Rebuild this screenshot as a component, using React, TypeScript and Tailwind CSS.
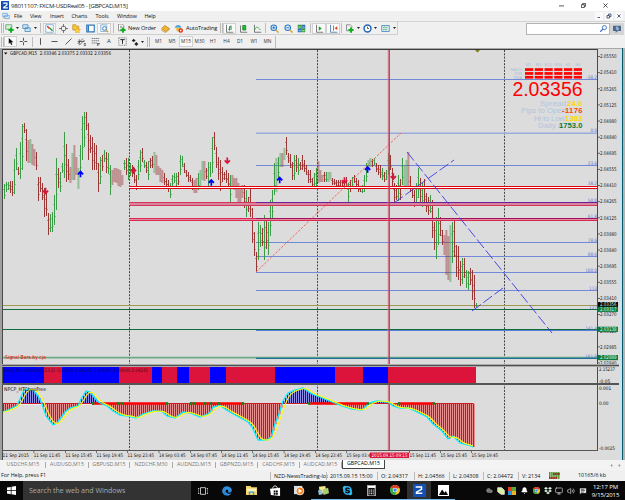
import type { ReactNode } from "react";
import { Bell, Cloud, Monitor, Volume2, MessageSquareText } from "lucide-react";
import { FaSkype, FaEdge } from "react-icons/fa";

const GREEN = "#2a9436";
const RED = "#922424";

// [high, low, kind] every 2px, upper case = pale body
const bars: [number, number, string][] = [
  [184, 199, "g"], [182, 192, "g"], [182, 190, "g"], [181, 193, "r"], [181, 196, "r"], [159, 194, "g"], [148, 170, "g"],
  [167, 175, "r"], [142, 179, "g"], [124, 170, "g"], [123, 133, "r"], [129, 161, "r"], [140, 163, "R"], [139, 163, "G"],
  [144, 165, "R"], [149, 166, "R"], [152, 170, "r"], [177, 201, "r"], [177, 192, "r"], [183, 200, "r"], [188, 217, "r"],
  [192, 216, "r"], [213, 235, "r"], [214, 232, "g"], [212, 232, "g"], [195, 225, "g"], [158, 210, "g"], [168, 188, "r"],
  [172, 192, "g"], [163, 173, "g"], [132, 178, "g"], [144, 182, "r"], [159, 180, "r"], [167, 183, "R"], [153, 180, "G"],
  [145, 180, "R"], [157, 175, "R"], [168, 189, "G"], [145, 177, "g"], [116, 160, "g"], [112, 147, "g"], [112, 130, "r"],
  [123, 160, "r"], [135, 153, "r"], [137, 170, "r"], [143, 170, "r"], [145, 170, "r"], [163, 192, "r"], [157, 184, "g"],
  [155, 171, "r"], [150, 162, "g"], [152, 173, "r"], [153, 174, "g"], [165, 195, "g"], [170, 185, "R"], [168, 182, "R"],
  [168, 183, "R"], [169, 186, "R"], [170, 187, "R"], [175, 185, "R"], [160, 170, "g"], [158, 175, "r"], [158, 180, "g"],
  [163, 176, "g"], [165, 177, "r"], [168, 183, "r"], [175, 190, "r"], [160, 180, "g"], [150, 172, "g"], [148, 162, "r"],
  [160, 168, "g"], [162, 173, "r"], [161, 180, "g"], [158, 168, "r"], [156, 168, "r"], [152, 173, "G"], [155, 175, "R"],
  [166, 175, "R"], [168, 182, "R"], [170, 183, "R"], [173, 185, "r"], [178, 187, "r"], [180, 192, "r"], [183, 198, "g"],
  [175, 187, "g"], [173, 183, "g"], [173, 187, "g"], [172, 185, "r"], [155, 175, "g"], [156, 167, "g"], [163, 173, "r"],
  [170, 177, "r"], [172, 182, "r"], [175, 182, "r"], [178, 190, "r"], [180, 193, "R"], [178, 193, "R"], [173, 190, "g"],
  [170, 187, "G"], [161, 180, "G"], [161, 181, "R"], [168, 179, "r"], [162, 188, "g"], [162, 177, "g"], [137, 173, "g"],
  [132, 150, "r"], [147, 168, "r"], [157, 180, "r"], [160, 191, "r"], [167, 182, "r"], [172, 180, "r"], [170, 183, "r"],
  [173, 188, "r"], [175, 202, "g"], [175, 187, "R"], [178, 190, "R"], [178, 198, "R"], [183, 206, "R"], [187, 206, "R"],
  [185, 198, "R"], [185, 208, "r"], [190, 217, "g"], [197, 212, "r"], [189, 217, "r"], [208, 243, "r"], [232, 256, "r"],
  [252, 272, "r"], [222, 260, "g"], [225, 247, "g"], [228, 246, "r"], [215, 260, "g"], [218, 249, "r"], [222, 255, "g"],
  [200, 236, "g"], [190, 220, "g"], [163, 195, "g"], [158, 192, "G"], [157, 178, "g"], [153, 167, "G"], [153, 167, "R"],
  [148, 160, "G"], [137, 155, "r"], [153, 163, "r"], [154, 168, "r"], [162, 180, "r"], [155, 180, "g"], [155, 172, "r"],
  [158, 175, "g"], [162, 170, "r"], [155, 170, "r"], [160, 172, "r"], [165, 175, "r"], [170, 183, "r"], [170, 183, "r"],
  [178, 187, "r"], [173, 187, "g"], [168, 187, "g"], [161, 183, "R"], [170, 182, "R"], [175, 182, "R"], [172, 182, "r"],
  [172, 182, "g"], [172, 182, "G"], [172, 180, "G"], [178, 185, "r"], [179, 185, "r"], [180, 187, "r"], [180, 187, "r"],
  [180, 188, "r"], [180, 187, "r"], [180, 189, "r"], [177, 189, "r"], [183, 202, "g"], [180, 192, "r"], [177, 187, "g"],
  [175, 183, "r"], [178, 187, "r"], [180, 192, "r"], [187, 192, "r"], [185, 193, "g"], [175, 192, "g"], [163, 182, "g"],
  [160, 168, "G"], [158, 167, "G"], [159, 167, "r"], [158, 165, "g"], [163, 172, "r"], [165, 175, "r"], [165, 178, "r"],
  [168, 180, "g"], [172, 182, "r"], [170, 180, "g"], [153, 175, "g"], [155, 170, "r"], [168, 186, "r"], [183, 203, "r"],
  [185, 200, "r"], [175, 201, "g"], [179, 200, "r"], [158, 185, "g"], [165, 187, "G"], [160, 188, "G"], [152, 188, "R"],
  [176, 192, "r"], [187, 198, "r"], [190, 207, "r"], [183, 203, "g"], [168, 198, "g"], [178, 203, "r"], [183, 207, "g"],
  [179, 203, "r"], [193, 212, "r"], [197, 215, "r"], [195, 213, "g"], [200, 238, "r"], [222, 250, "r"], [217, 259, "g"],
  [208, 245, "g"], [217, 236, "r"], [230, 245, "r"], [235, 255, "R"], [230, 275, "R"], [236, 280, "R"], [225, 282, "G"],
  [222, 263, "g"], [220, 257, "r"], [245, 277, "r"], [246, 280, "r"], [261, 286, "r"], [258, 284, "g"], [258, 278, "r"],
  [270, 288, "g"], [271, 290, "g"], [268, 285, "r"], [270, 300, "r"], [275, 308, "r"], [303, 308, "g"],
];

const strip: [number, number, boolean][] = [
  [3, 44, true], [44, 62, false], [62, 119, true], [119, 152, false], [152, 162, true], [162, 177, false],
  [177, 189, true], [189, 210, false], [210, 226, true], [226, 275, false], [275, 335, true], [335, 363, false],
  [363, 388, true], [388, 476, false],
];

const curve: [number, number][] = [
  [3, 412], [10, 409], [17, 405.5], [20, 399], [24, 390], [28, 389], [33, 390], [38, 396], [42, 404], [46, 416],
  [53, 425], [57, 423], [60, 419], [65, 412], [70, 408], [78, 406], [81, 399], [86, 391], [90, 392], [94, 397],
  [98, 402], [107, 406], [113, 411], [120, 415], [128, 416], [136, 418], [143, 414], [153, 411], [162, 411.5],
  [167, 416], [175, 418], [183, 412], [190, 413], [200, 417], [208, 414], [211, 411], [213, 407], [220, 405.5],
  [228, 411], [237, 416], [248, 422], [252, 427], [258, 440], [267, 440], [271, 437], [275, 424], [279, 414],
  [283, 401], [288, 393], [295, 390], [303, 388], [312, 394], [320, 397], [332, 402], [342, 406], [352, 409],
  [362, 410], [367, 405], [372, 402], [377, 401], [388, 402], [393, 406], [400, 408], [408, 408], [415, 411],
  [427, 417], [433, 424], [442, 431], [448, 439], [453, 436], [460, 443], [468, 445], [473, 447],
];

function curveAt(x: number) {
  if (x <= 3) return 412;
  for (let i = 1; i < curve.length; i++) {
    const [x0, y0] = curve[i - 1];
    const [x1, y1] = curve[i];
    if (x <= x1) return y0 + ((y1 - y0) * (x - x0)) / (x1 - x0);
  }
  return 447;
}

function signalAt(x: number) {
  return (curveAt(x - 6) + curveAt(x - 4) + curveAt(x - 2) + curveAt(x)) / 4;
}

const xs = Array.from({ length: 236 }, (_, i) => 3 + i * 2);
const signal = xs.map((x) => `${x},${signalAt(x).toFixed(1)}`).join(" ");

const prices = [
  "2.05550", "2.05410", "2.05265", "2.05125", "2.04980", "2.04840", "2.04695", "2.04555", "2.04410", "2.04265",
  "2.04125", "2.03980", "2.03840", "2.03695", "2.03555", "2.03410", "2.03270", "2.03125", "2.02985", "2.02840",
];

const fibs: [number, string][] = [
  [79.5, "-38.2"], [133, "0.0"], [165.5, "23.6"], [186, "38.2"], [202.5, "50.0"], [219, "61.8"], [242.5, "78.6"],
  [256.5, "88.6"], [272.5, "100.0"], [290.5, "113"], [309.5, "127"], [330.5, "141.4"], [358.5, "161.8"],
];

const dates: [number, string][] = [
  [2, "11 Sep 2015"], [33.3, "11 Sep 11:45"], [65, "11 Sep 15:45"], [96, "11 Sep 19:45"], [127, "11 Sep 23:45"],
  [158.5, "14 Sep 03:45"], [190, "14 Sep 07:45"], [221, "14 Sep 11:45"], [252, "14 Sep 15:45"],
  [283.5, "14 Sep 19:45"], [315, "14 Sep 23:45"], [346, "15 Sep 03:45"], [409, "15 Sep 11:45"],
  [440, "15 Sep 15:45"], [471, "15 Sep 19:45"],
];

const tags: [number, string, string][] = [
  [302, "2.03356", "#000"], [306.7, "2.03317", "#0f7a3c"], [326.7, "2.03138", "#0f7a3c"], [355, "2.02889", "#0f7a3c"],
];

function Arrow({ x, y, up }: { x: number; y: number; up?: boolean }) {
  return (
    <path
      d="M0 -3.2V2.4M-2.6 -0.4L0 2.4L2.6 -0.4"
      transform={`translate(${x} ${y})${up ? " scale(1 -1)" : ""}`}
      fill="none"
      stroke={up ? "#0000ff" : "#dc143c"}
      strokeWidth="1.7"
    />
  );
}

function Chart() {
  return (
    <svg width="625" height="412" viewBox="0 48 625 412" className="block shrink-0">
      <rect x="0" y="48" width="625" height="412" fill="#f0f0f0" />
      <rect x="0" y="48" width="2" height="412" fill="#a0a0a0" />
      <rect x="2" y="49" width="618" height="411" fill="#dcdcdc" />
      <rect x="619" y="48" width="3" height="412" fill="#c5e3f2" />
      <rect x="622" y="48" width="1" height="412" fill="#0c5563" />
      <rect x="623" y="48" width="2" height="412" fill="#b4b4b4" />
      <rect x="0" y="48" width="622" height="1" fill="#a8a8a8" />
      <rect x="2" y="49" width="596" height="1" fill="#3c3c3c" />
      <path d="M2.5 49V460M597.5 49V451" stroke="#4a4a4a" fill="none" />

      {/* session separators */}
      <path d="M129.5 50V450M317.5 50V450M504.5 50V450" stroke="#444" strokeDasharray="2 1.3" />

      {/* levels */}
      <path
        d="M256 79.5H597M256 165.5H597M256 242.5H597M256 256.5H597M256 272.5H597M256 290.5H597"
        stroke="#6f8ad8"
      />
      <path d="M256 133.2H597" stroke="#98abdc" strokeWidth="1.6" />
      <path d="M3 305.5H597" stroke="#a09a50" />
      <path d="M3 309.5H597M3 329.5H597" stroke="#0f6b3c" />
      <path d="M256 330.5H597" stroke="#5580d8" />
      <path d="M3 357.7H597" stroke="#6cab88" strokeWidth="1.7" />
      <path d="M256 358.3H597" stroke="#20709a" strokeWidth="1.2" />

      {bars.map(([hi, lo, k], i) => {
        const x = 4 + i * 2;
        const pale = k === "G" || k === "R";
        const color = k.toLowerCase() === "g" ? GREEN : RED;
        return pale ? (
          <rect key={i} x={x - 0.6} y={hi} width="2" height={lo - hi} fill={color} opacity="0.4" />
        ) : (
          <g key={i} fill={color}>
            <rect x={x} y={hi} width="1" height={lo - hi} opacity="0.9" />
            <rect x={x - 1} y={Math.round(hi + (lo - hi) * 0.3)} width="1" height="1" opacity="0.45" />
            <rect x={x + 1} y={Math.round(hi + (lo - hi) * 0.7)} width="1" height="1" opacity="0.45" />
          </g>
        );
      })}

      <rect x="129" y="187" width="468" height="1" fill="#fff" />
      <path d="M129 186.5H597M129 188.5H597" stroke="#e00010" />
      <rect x="129" y="203" width="468" height="2" fill="#d8849c" />
      <path d="M129 202.5H597M129 205.5H597" stroke="#d5375c" />
      <path d="M256 202.5H597" stroke="#6a1f9a" />
      <rect x="129" y="219" width="468" height="1" fill="#e08aa4" />
      <path d="M129 218.5H597M129 220.5H597" stroke="#dc2850" />
      <path d="M256 218.5H597" stroke="#a0105c" />

      <path d="M256 272L401 133" stroke="#f05a4c" strokeWidth="0.9" strokeDasharray="2.4 1.5" />
      <path d="M407 152L552 333M394 203L454 160M472 311L503 288" stroke="#3a3ae6" strokeWidth="0.9" strokeDasharray="11 3" />
      <path d="M388 50V450" stroke="#aaa" strokeWidth="0.6" />
      <path d="M389.2 50V450" stroke="#e0244c" strokeWidth="1.4" />

      <Arrow x={45.5} y={191} />
      <Arrow x={133.5} y={170} />
      <Arrow x={227.3} y={160.7} />
      <Arrow x={344.5} y={180.5} />
      <Arrow x={393.3} y={176.5} />
      <Arrow x={80.5} y={174} up />
      <Arrow x={211.3} y={182.5} up />
      <Arrow x={279.7} y={180} up />
      <Arrow x={367.6} y={169.5} up />

      {/* price panel */}
      <path d="M475 50h5l-2.5 2.5z" fill="#808000" />
      <g fontFamily="Liberation Sans, sans-serif">
        <g fontSize="3.8" fill="#a8bcd8">
          {["M1", "M5", "M15", "M30", "H1", "H4"].map((t, i) => (
            <text key={t} x={528.5 + i * 9.9} y="66" textAnchor="middle">{t}</text>
          ))}
          <text x="522" y="71" textAnchor="end">MACD</text>
          <text x="522" y="75" textAnchor="end">STR</text>
          <text x="522" y="79" textAnchor="end">EMA</text>
        </g>
        {[68.2, 72.1, 75.9].map((y) =>
          [0, 1, 2, 3, 4, 5].map((c) => (
            <rect key={`${y}-${c}`} x={525 + c * 9.75} y={y} width="8.2" height="2.7" fill="#ff0000" />
          ))
        )}
        <text x="512.5" y="95.7" fontSize="19.5" textLength="70" fill="#ff0000">2.03356</text>
        <g fontSize="7.8" fill="#b0c4de">
          <text x="540" y="106" textLength="26">Spread</text>
          <text x="521" y="113.3" textLength="45">Pips to Open</text>
          <text x="534" y="120.5" textLength="31">Hi to Low</text>
          <text x="538" y="127.8" textLength="25">Daily A</text>
        </g>
        <g fontSize="7.6" fontWeight="bold">
          <text x="567" y="106" textLength="15.5" fill="#ffd700">24.0</text>
          <text x="562" y="113.3" textLength="20.5" fill="#ff4500">-1176</text>
          <text x="565" y="120.5" textLength="17.5" fill="#ffd700">1383</text>
          <text x="559" y="127.8" textLength="23.5" fill="#0a7a3a">1753.0</text>
        </g>
      </g>

      <g fontFamily="DejaVu Sans Condensed, DejaVu Sans, sans-serif" fontSize="5">
        <path d="M4 52.5h3.4l-1.7 2z" fill="#000" />
        <text x="10" y="55.4" textLength="101" lengthAdjust="spacingAndGlyphs" fill="#111">
          GBPCAD,M15&nbsp; 2.03346 2.03375 2.03332 2.03356
        </text>
        <text x="5" y="359" fontSize="5.4" textLength="41" lengthAdjust="spacingAndGlyphs" fill="#ff0000">
          Signal Bars by cja
        </text>
        <g fontSize="4.6" fill="#5f7bd0" textAnchor="end">
          {fibs.map(([y, t]) => (
            <text key={t} x="597" y={y - 1}>{t}</text>
          ))}
        </g>
        <g fill="#222">
          {prices.map((p, i) => (
            <g key={p}>
              <path d={`M598 ${56.5 + i * 16.13}h2`} stroke="#444" strokeWidth="0.8" />
              <text x="600" y={58.3 + i * 16.13} textLength="16.5" lengthAdjust="spacingAndGlyphs">{p}</text>
            </g>
          ))}
        </g>
        {tags.map(([y, t, bg]) => (
          <g key={t}>
            <rect x="598" y={y} width="20" height="5.2" fill={bg} />
            <text x="600" y={y + 4.4} textLength="16.5" lengthAdjust="spacingAndGlyphs" fill="#dfe">{t}</text>
          </g>
        ))}
      </g>

      {/* deep bar strip */}
      <rect x="2" y="364" width="617" height="3" fill="#aaa" />
      <rect x="2" y="365" width="617" height="1" fill="#505050" />
      {strip.map(([a, b, up]) => (
        <rect key={a} x={a} y="367" width={b - a} height="16" fill={up ? "#0000ff" : "#dc143c"} />
      ))}
      <rect x="2" y="383" width="617" height="2" fill="#555" />

      {/* oscillator */}
      <path d="M3 404.5H309" stroke="#eee" />
      {xs.map((x) => {
        const y = curveAt(x);
        return (
          <rect
            key={x}
            x={x}
            y={Math.min(y, 403.5)}
            width="1.35"
            height={Math.abs(y - 403.5)}
            fill={y < 403.5 ? "#0000ff" : "#ff0000"}
          />
        );
      })}
      <path d="M3 403.5H473" stroke="#cc1c24" />
      <path d="M92 403.5H166M190 403.5H243M309 403.5H367M399 403.5H434" stroke="#ff0000" strokeWidth="2.4" />
      <polyline points={curve.map((p) => p.join(",")).join(" ")} fill="none" stroke="#00f0ff" strokeWidth="1.3" />
      <polyline points={signal} fill="none" stroke="#ffff00" strokeWidth="1.1" />
      {[93, 118, 122, 167, 191, 194, 205, 211, 219, 243, 309, 368, 399, 434].map((x) => (
        <circle key={x} cx={x} cy="403.5" r="1.4" fill="#0a8a1c" />
      ))}

      <path d="M2 450.5H598" stroke="#555" />
      <g fontFamily="DejaVu Sans Condensed, DejaVu Sans, sans-serif" fontSize="4.8" fill="#111">
        <text x="4" y="372.3" textLength="144" lengthAdjust="spacingAndGlyphs" opacity="0.75">
          Deep Bar Indicator (33.1) -1.00000 2.04241 -1.00000 -1.00000 2.04241
        </text>
        <text x="4" y="391" fontSize="5" textLength="42" lengthAdjust="spacingAndGlyphs">NPCP_HTChopFree</text>
        <text x="599" y="371" textLength="16" lengthAdjust="spacingAndGlyphs">2.15237</text>
        <text x="599" y="382.5">-0.05</text>
        <text x="599" y="390">0.001</text>
        <text x="599" y="405">0.00</text>
        <text x="599" y="449.5" textLength="16" lengthAdjust="spacingAndGlyphs">-0.0025</text>
        {dates.map(([x, t]) => (
          <g key={x}>
            <path d={`M${x + 0.5} 450v3`} stroke="#555" strokeWidth="0.8" />
            <text x={x + 0.5} y="457" textLength="26.5" lengthAdjust="spacingAndGlyphs">{t}</text>
          </g>
        ))}
        <rect x="370" y="452.5" width="39" height="5.5" fill="#dc143c" />
        <text x="371.5" y="457" textLength="36" lengthAdjust="spacingAndGlyphs" fill="#fff">2015.09.15 09:15</text>
      </g>
    </svg>
  );
}

function Icon({ children, size = 9 }: { children: ReactNode; size?: number }) {
  return (
    <svg width={size} height={size} viewBox="0 0 12 12" fill="none" className="block shrink-0">
      {children}
    </svg>
  );
}

function Cell({ w, on, children }: { w: string; on?: boolean; children?: ReactNode }) {
  return (
    <div className={`flex h-[11px] shrink-0 items-center justify-center ${w} ${on ? "border border-[#d0d0d0] bg-[#f9f9f9]" : ""}`}>
      {children}
    </div>
  );
}

const Sep = () => <div className="h-[10px] w-px shrink-0 bg-[#bdbdbd]" />;
const Grip = () => <div className="h-[10px] w-[3px] shrink-0 border-x border-[#b8b8b8]" />;
const Caret = () => (
  <svg width="3" height="2" viewBox="0 0 6 4" className="block">
    <path d="M0 0h6l-3 4z" fill="#222" />
  </svg>
);

const Plus = () => <path d="M8 4.5v7M4.5 8h7" stroke="#10b020" strokeWidth="2.6" />;

function TitleBar() {
  return (
    <div className="flex h-[11px] shrink-0 items-center bg-white pl-[1px] pr-[17px] text-[6.1px] text-[#222]">
      <div className="flex h-[9px] w-[8px] items-center justify-center bg-[#1450b4]">
        <Icon size={7}>
          <path d="M2 2h6.5v3L3 9v1h7" stroke="#fff" strokeWidth="2" />
        </Icon>
      </div>
      <span className="ml-[2px] whitespace-nowrap tracking-[-0.28px]">98011107: FXCM-USDReal05 - [GBPCAD,M15]</span>
      <div className="ml-auto flex gap-[17px]">
        <Icon size={5}><path d="M0 7h12" stroke="#222" strokeWidth="1.8" /></Icon>
        <Icon size={5}><path d="M1 4h7v7H1zM4 4V1h7v7H8" stroke="#222" strokeWidth="1.8" /></Icon>
        <Icon size={5}><path d="M1 1l10 10M11 1L1 11" stroke="#222" strokeWidth="1.8" /></Icon>
      </div>
    </div>
  );
}

function MenuBar() {
  return (
    <div className="flex h-[11px] shrink-0 items-center border-b border-[#d4d4d4] text-[5.4px] tracking-[-0.1px] text-[#111]">
      <div className="w-[14px] pl-[2px]">
        <Icon size={8}>
          <path d="M1 2h7v5H1zM4 5h7v5H4z" fill="#d8ecfa" stroke="#5b9bd0" />
          <path d="M1 10l2-2 2 2" stroke="#e0a040" />
        </Icon>
      </div>
      <span className="w-[16px]">File</span>
      <span className="w-[20px]">View</span>
      <span className="w-[21.5px]">Insert</span>
      <span className="w-[24px]">Charts</span>
      <span className="w-[21.5px]">Tools</span>
      <span className="w-[27.5px]">Window</span>
      <span>Help</span>
      <div className="ml-auto flex gap-[2px] pr-[2px]">
        {["M3 9h5", "M2 5h5v5H2zM5 5V2h5v5H7", "M3 3l6 6M9 3l-6 6"].map((d) => (
          <div key={d} className="flex h-[8px] w-[8px] items-center justify-center bg-[#fafafa]">
            <Icon size={6}><path d={d} stroke="#3a4a68" strokeWidth="1.7" /></Icon>
          </div>
        ))}
      </div>
    </div>
  );
}

function MainToolbar() {
  return (
    <div className="flex h-[13px] shrink-0 items-center pl-[1px] text-[5.7px] text-[#111]">
      <div className="flex h-[13px] w-[397px] shrink-0 items-center border-b border-r border-[#cfcfcf]">
        <Grip />
        <Cell w="w-[11px]"><Icon><path d="M1 1h8v6H1z" fill="#d8f0d8" stroke="#4a9a5a" /><Plus /></Icon></Cell>
        <Cell w="w-[5px]"><Caret /></Cell>
        <Cell w="w-[13px]"><Icon><path d="M1 1h7v5H1zM4 5h7v5H4z" fill="#cfe4f6" stroke="#3f85b5" /></Icon></Cell>
        <Cell w="w-[4px]"><Caret /></Cell>
        <Cell w="w-[6px]"><Sep /></Cell>
        <Cell w="w-[13px]" on>
          <Icon><path d="M1 1h10v10H1z" fill="#fff" stroke="#5aa0d0" /><path d="M3 3l3 3" stroke="#e03020" strokeWidth="2" /><path d="M6 5l4 4" stroke="#20a030" strokeWidth="2" /></Icon>
        </Cell>
        <Cell w="w-[14px]"><Icon><circle cx="6" cy="6" r="3.2" stroke="#555" /><path d="M6 0v4M6 8v4M0 6h4M8 6h4" stroke="#555" /></Icon></Cell>
        <Cell w="w-[13px]"><Icon><path d="M1 1h4l1 2h3v5H1z" fill="#f5c842" stroke="#c89018" /><path d="M7 5l1.5 2.2 2.8.2-2 2 .5 2.5-2.6-1.2-2.4 1.2.4-2.6-2-1.9 2.8-.2z" fill="#ffd84a" stroke="#c89018" strokeWidth=".6" /></Icon></Cell>
        <Cell w="w-[14px]"><Icon><path d="M1 1.5h10v9H1z" fill="#fff" stroke="#2f78b8" strokeWidth="1.5" /><path d="M2 2h2v8H2z" fill="#2f78b8" /></Icon></Cell>
        <Cell w="w-[14px]" on><Icon><path d="M1 1h8v9H1z" fill="#e8f2fb" stroke="#7aa6cc" /><circle cx="6" cy="6" r="2.6" stroke="#2a70b0" /><path d="M8 8l3 3" stroke="#d8a030" strokeWidth="1.6" /></Icon></Cell>
        <Cell w="w-[5px]"><Sep /></Cell>
        <Cell w="w-[11px]"><Icon><path d="M2 0h5l2 2v7H2z" fill="#fff" stroke="#777" /><path d="M4 3h3M4 5h3" stroke="#777" /><Plus /></Icon></Cell>
        <span className="w-[32px] shrink-0 whitespace-nowrap pl-[1px] tracking-[-0.12px]">New Order</span>
        <Cell w="w-[12px]"><Icon><path d="M1 6l4-4 6 4-5 4z" fill="#f0b828" stroke="#b07a10" /><path d="M1 7v1.5l5 3 5-4V6" stroke="#c88a10" /></Icon></Cell>
        <Cell w="w-[15px]"><Icon><path d="M1 5c1-5 8-5 9 0z" fill="#4aa4e0" /><path d="M2 5h7v5H4z" fill="#f0c040" /><circle cx="9" cy="8.5" r="3" fill="#e02818" /><path d="M8 7.5h2v2H8z" fill="#fff" /></Icon></Cell>
        <span className="w-[34px] shrink-0 whitespace-nowrap tracking-[-0.12px]">AutoTrading</span>
        <Grip />
        <Cell w="w-[13px]" on><Icon><path d="M2 1v10h9M6 3v6M4 7h2M6 4h2" stroke="#555" /><path d="M8 2v6" stroke="#18a030" strokeWidth="1.4" /></Icon></Cell>
        <Cell w="w-[14px]"><Icon><path d="M2 2v9h9" stroke="#555" /><path d="M5 2h4v6H5z" fill="#20c038" stroke="#0a7a1c" /></Icon></Cell>
        <Cell w="w-[14px]"><Icon><path d="M2 1v10h9" stroke="#555" /><path d="M2 8c2-5 4-5 8 0" stroke="#18a030" /></Icon></Cell>
        <Cell w="w-[3px]"><Sep /></Cell>
        <Cell w="w-[14px]"><Icon><circle cx="5" cy="5" r="3.7" fill="#d4eafc" stroke="#2d7cc8" strokeWidth="1.4" /><path d="M3 5h4M5 3v4" stroke="#1860b0" /><path d="M8 8l3.5 3.5" stroke="#d8a830" strokeWidth="2" /></Icon></Cell>
        <Cell w="w-[14px]"><Icon><circle cx="5" cy="5" r="3.7" fill="#d4eafc" stroke="#2d7cc8" strokeWidth="1.4" /><path d="M3 5h4" stroke="#1860b0" /><path d="M8 8l3.5 3.5" stroke="#d8a830" strokeWidth="2" /></Icon></Cell>
        <Cell w="w-[13px]"><Icon><path d="M1 1h5v5H1zM6 6h5v5H6z" fill="#30a030" /><path d="M6 1h5v5H6zM1 6h5v5H1z" fill="#2868b8" /><path d="M2 4h3M7 4h3M2 9h3M7 9h3" stroke="#dfe" /></Icon></Cell>
        <Cell w="w-[4px]"><Sep /></Cell>
        <Cell w="w-[14px]" on><Icon><path d="M2 1v10h9" stroke="#555" /><path d="M5 3l4 3-4 3z" fill="#18a030" /></Icon></Cell>
        <Cell w="w-[14px]" on><Icon><path d="M2 1v10h9M6 2v7" stroke="#3a6a9a" /><path d="M11 3L7.5 5.5 11 8z" fill="#d04020" /></Icon></Cell>
        <Cell w="w-[3px]"><Sep /></Cell>
        <Cell w="w-[13px]"><Icon><path d="M2 1h5l2 2v6H2z" fill="#eee" stroke="#777" /><Plus /></Icon></Cell>
        <Cell w="w-[4px]"><Caret /></Cell>
        <Cell w="w-[14px]"><Icon><circle cx="6" cy="6" r="4.6" fill="#fff" stroke="#2468b4" strokeWidth="2" /><path d="M6 3.5V6h2" stroke="#333" /></Icon></Cell>
        <Cell w="w-[3px]"><Caret /></Cell>
        <Cell w="w-[16px]"><Icon><path d="M1 2h10v8H1z" fill="#e4f2fa" stroke="#3a7ab0" /><path d="M2.5 5l2-1 2 1 2-1M2.5 8l2-1 2 1 2-1" stroke="#30a050" /></Icon></Cell>
        <Cell w="w-[3px]"><Caret /></Cell>
      </div>
      <div className="ml-auto flex h-[12px] w-[84px] items-center justify-end border border-[#b4b4b4] bg-white pr-[2px]">
        <Icon size={7}><circle cx="7.5" cy="4.5" r="3.5" stroke="#3b6fc4" strokeWidth="1.6" /><path d="M5 7l-4.5 4.5" stroke="#3b6fc4" strokeWidth="2.2" /></Icon>
      </div>
      <div className="mr-[1px] flex h-[12px] w-[14px] items-center justify-center bg-[#d4d4d4]">
        <Icon size={8}><path d="M0 1h12v8H7l-3 3V9H0z" fill="#49698f" /><path d="M5 3h3M5 3v2h3v2H5" stroke="#dfe8f4" /></Icon>
      </div>
    </div>
  );
}

function LineToolbar() {
  const tfs: [string, string][] = [
    ["M5", "w-[14px]"], ["M15", "w-[14px]"], ["M30", "w-[13px]"], ["H1", "w-[14px]"], ["H4", "w-[13px]"],
    ["D1", "w-[14px]"], ["W1", "w-[14px]"], ["MN", "w-[13px]"],
  ];
  return (
    <div className="flex h-[13px] shrink-0 items-center pl-[1px]">
      <div className="flex h-[12px] w-[275px] shrink-0 items-center border-r border-[#bdbdbd] text-[4.8px] text-[#333]">
        <Grip />
        <Cell w="w-[13px]" on><Icon size={7}><path d="M3 0v10l2.4-2 1.8 4 2-1-1.8-3.6H11z" fill="#111" /></Icon></Cell>
        <Cell w="w-[13px]"><Icon><path d="M6 1v4M6 7v4M1 6h4M7 6h4" stroke="#444" strokeWidth="1.2" /></Icon></Cell>
        <Cell w="w-[4px]"><Sep /></Cell>
        <Cell w="w-[13px]"><Icon><path d="M6 1.5v9" stroke="#444" strokeWidth="1.2" /></Icon></Cell>
        <Cell w="w-[14px]"><Icon><path d="M2 6h8" stroke="#444" strokeWidth="1.2" /></Icon></Cell>
        <Cell w="w-[14px]"><Icon><path d="M2 10l8-8" stroke="#444" strokeWidth="1.2" /></Icon></Cell>
        <Cell w="w-[13px]"><Icon><path d="M1 9l7-7M3 11l7-7M1 6h9M3 3v7" stroke="#444" /><path d="M9 9h3M9 11h3" stroke="#222" /></Icon></Cell>
        <Cell w="w-[14px]"><Icon><path d="M1 2h10M1 5h10M1 8h7" stroke="#555" strokeDasharray="2 .6" /><path d="M9 8v4M9 9h3" stroke="#222" /></Icon></Cell>
        <Cell w="w-[14px]"><span className="text-[6px]">A</span></Cell>
        <Cell w="w-[13px]"><Icon><path d="M1 1h10v10H1z" stroke="#666" strokeDasharray="1.4 1" /><path d="M3 3.5h6M6 3.5V9" stroke="#222" strokeWidth="1.3" /></Icon></Cell>
        <Cell w="w-[12px]"><Icon size={8}><path d="M1 4l3-3 3 3-3 2zM5 9l3-3 3 3-3 3z" fill="#222" /></Icon></Cell>
        <Cell w="w-[3px]"><Caret /></Cell>
        <Cell w="w-[8px]"><Grip /></Cell>
        <Cell w="w-[13px]">M1</Cell>
        {tfs.map(([t, w]) => (
          <Cell key={t} w={w} on={t === "M15"}>{t}</Cell>
        ))}
      </div>
    </div>
  );
}

function ChartTabs() {
  const tabs: [string, string][] = [
    ["USDCHF,M15", "w-[45px]"], ["AUDUSD,M15", "w-[43px]"], ["GBPUSD,M15", "w-[41px]"], ["NZDCHF,M30", "w-[43px]"],
    ["AUDNZD,M15", "w-[43px]"], ["GBPNZD,M15", "w-[42px]"], ["CADCHF,M15", "w-[42px]"], ["AUDCAD,M15", "w-[42px]"],
  ];
  return (
    <div className="flex h-[10px] shrink-0 items-center bg-[#f3f3f3] pl-[1px] text-[5.3px] text-[#777]">
      {tabs.map(([t, w]) => (
        <div key={t} className={`flex h-[6px] shrink-0 items-center justify-center border-r border-[#aaa] ${w}`}>{t}</div>
      ))}
      <div className="flex h-[9px] w-[43px] items-center justify-center self-start border border-t-0 border-[#444] bg-white text-black">
        GBPCAD,M15
      </div>
      <div className="ml-auto flex gap-[5px] pr-[4px]">
        <Icon size={3}><path d="M9 0v12L2 6z" fill="#888" /></Icon>
        <Icon size={3}><path d="M3 0v12l7-6z" fill="#888" /></Icon>
      </div>
    </div>
  );
}

function StatusBar() {
  const cells: [string, string][] = [
    ["NZD-NewsTrading-lot", "w-[56px]"], ["2015.09.15 15:00", "w-[51px]"], ["O: 2.04317", "w-[37px]"],
    ["H: 2.04566", "w-[35px]"], ["L: 2.04308", "w-[34px]"], ["C: 2.04472", "w-[35px]"], ["V: 2134", "w-[32px]"],
  ];
  return (
    <div className="flex h-[11px] shrink-0 items-center bg-[#f0f0f0] text-[5.4px] text-[#111]">
      <span className="w-[270px] shrink-0 pl-[1px]">For Help, press F1</span>
      {cells.map(([t, w]) => (
        <div key={t} className={`h-[8px] shrink-0 whitespace-nowrap border-l border-[#bbb] pl-[3px] leading-[8px] ${w}`}>{t}</div>
      ))}
      <svg width="11" height="7" viewBox="0 0 11 7" className="ml-[-1px] block">
        <path d="M0 3.5h11" stroke="#5a9a30" strokeWidth="7" strokeDasharray="1.6 .5" />
        <path d="M0 6h8" stroke="#b02828" strokeWidth="2" strokeDasharray="1.6 .5" />
        <path d="M4 2h7" stroke="#8a3030" strokeWidth="2" strokeDasharray="1.6 .5" />
      </svg>
      <span className="ml-[18px] whitespace-nowrap">10165/6 kb</span>
    </div>
  );
}

function Taskbar() {
  const app = "flex h-[19px] w-[24px] shrink-0 items-center justify-center";
  const open = `${app} border-b border-[#76b9ed]`;
  return (
    <div className="flex h-[19px] shrink-0 items-center bg-[#080808] text-white">
      <div className="flex w-[23px] justify-center">
        <Icon><path d="M0 2l5-.8v4.4H0zM6 1l6-1v5.6H6zM0 6.5h5v4.4L0 10zM6 6.5h6V12l-6-1z" fill="#fff" /></Icon>
      </div>
      <div className="flex h-[19px] w-[168px] items-center bg-[#333] pl-[6px] text-[7.1px] tracking-[-0.04px] text-[#aaa]">Search the web and Windows</div>
      <div className={app}><Icon size={10}><path d="M3 2h6v8H3zM1.5 3H0v6h1.5M10.5 3H12v6h-1.5" stroke="#ddd" /></Icon></div>
      <div className={app}><FaEdge size={10} color="#2d8fe0" /></div>
      <div className={app}><Icon size={11}><path d="M0 1h5l1 1.5h6V11H0z" fill="#f5d56a" /><path d="M1 4h10v3H1z" fill="#fff3c0" /><path d="M3 11V7h6v4H7.5V8.5h-3V11z" fill="#3fa0dc" /></Icon></div>
      <div className={app}><Icon size={11}><path d="M0 4l11-1v9L1 11z" fill="#fff" /><path d="M3 4c0-4 5-4 5 0" stroke="#fff" /><path d="M4 6h2v2H4zM6.5 6h2v2h-2zM4 8.5h2v2H4zM6.5 8.5h2v2h-2z" fill="#080808" /></Icon></div>
      <div className={app}><Icon size={11}><rect x="0" y="1" width="9" height="9" fill="#cfe0ec" /><circle cx="6.5" cy="6.5" r="4.3" fill="#f08020" stroke="#fff" strokeWidth=".8" /><path d="M5 4l4 2.5L5 9z" fill="#fff" /></Icon></div>
      <div className={open}><Icon size={11}><path d="M1 2l7-1 1 7-7 2z" fill="#f5e68a" /><path d="M5 5l6-2 1 6-6 2z" fill="#a8cc70" /><path d="M0 6l4-1 1 5-4 1z" fill="#8cc0e0" /></Icon></div>
      <div className={open}><FaSkype size={11} color="#2fb5f0" /></div>
      <div className={open}><Icon size={11}><path d="M2 0h8v12H2z" stroke="#fff" /><path d="M2 2h8" stroke="#fff" strokeWidth="2.4" /><path d="M3.5 5.5h5M3.5 7.5h5M3.5 9.5h5" stroke="#fff" strokeDasharray="1.2 .7" /></Icon></div>
      <div className={open}><Chrome size={10} /></div>
      <div className={`${open} bg-[#303030]`}>
        <div className="flex h-[13px] w-[13px] items-center justify-center bg-[#1450b4]">
          <Icon size={10}><path d="M2 2.5h7v2.8L3 8.6v1.2h7" stroke="#fff" strokeWidth="1.8" /></Icon>
        </div>
      </div>
      <div className={open}><Icon size={11}><path d="M0 0h12v12H0z" fill="#fff" /><path d="M1 11l3.5-6L7 8.5l1.5-2L11 11z" fill="#080808" /></Icon></div>
      <div className="ml-auto flex items-center">
        <div className="flex w-[12px] justify-center"><Cloud size={7} color="#888" fill="#777" /></div>
        <div className="flex w-[11px] justify-center"><Icon size={8}><path d="M1 1h6l4 4v6H6L1 7z" fill="#d8f0a0" stroke="#fff" /></Icon></div>
        <div className="flex w-[12px] justify-center"><Icon size={8}><path d="M0 0h6v6H0z" fill="#e84020" /><path d="M6 0h6v6H6z" fill="#58a838" /><path d="M0 6h6v6H0z" fill="#2890d8" /><path d="M6 6h6v6H6z" fill="#f0b020" /></Icon></div>
        <div className="flex w-[12px] justify-center"><Bell size={7} color="#fff" fill="#fff" /></div>
        <div className="flex w-[12px] justify-center"><Chrome size={7} /></div>
        <div className="flex w-[11px] justify-center"><Icon size={8}><path d="M3 0l3 2-3 2-3-2zM9 0l3 2-3 2-3-2zM3 4l3 2-3 2-3-2zM9 4l3 2-3 2-3-2zM6 7l3 2-3 2-3-2z" fill="#d8f0e0" /></Icon></div>
        <div className="flex w-[12px] justify-center"><Monitor size={8} color="#ddd" /></div>
        <div className="flex w-[12px] justify-center"><Volume2 size={8} color="#ddd" /></div>
        <div className="flex w-[12px] justify-center"><MessageSquareText size={8} color="#080808" fill="#fff" /></div>
      </div>
      <div className="mr-[3px] w-[33px] text-center text-[6px] leading-[8px] tracking-[-0.1px]">
        <div>12:17 PM</div>
        <div>9/15/2015</div>
      </div>
    </div>
  );
}

function Chrome({ size }: { size: number }) {
  return (
    <Icon size={size}>
      <circle cx="6" cy="6" r="6" fill="#f4c720" />
      <path d="M6 6L.8 3a6 6 0 0 1 10.4 0z" fill="#e0382c" />
      <path d="M6 6L.8 3A6 6 0 0 0 6 12l2-4z" fill="#30a850" />
      <circle cx="6" cy="6" r="2.8" fill="#fff" />
      <circle cx="6" cy="6" r="2.1" fill="#4084f0" />
    </Icon>
  );
}

export default function App() {
  return (
    <div className="flex h-[500px] w-[625px] flex-col overflow-hidden bg-[#f0f0f0] font-['Open_Sans','Noto_Sans',sans-serif]">
      <TitleBar />
      <MenuBar />
      <MainToolbar />
      <LineToolbar />
      <Chart />
      <ChartTabs />
      <StatusBar />
      <Taskbar />
    </div>
  );
}
